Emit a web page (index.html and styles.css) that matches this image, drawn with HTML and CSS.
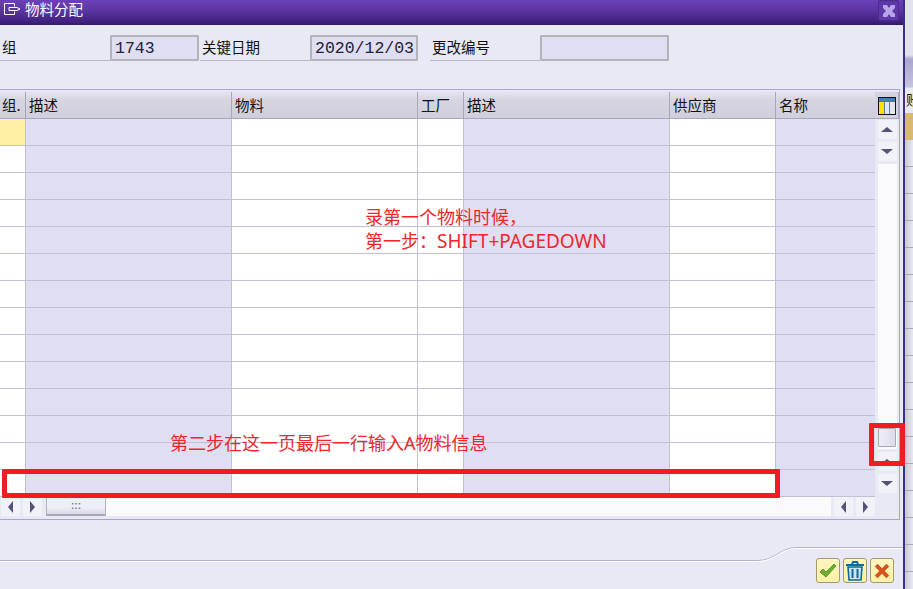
FILE: index.html
```html
<!DOCTYPE html>
<html>
<head>
    <title>物料分配</title>
    <link rel="stylesheet" href="styles.css">
</head>
<body>

<div class="window">
    <div class="titlebar">
        <svg class="title-icon" width="19" height="14" viewBox="0 0 19 14"><path d="M1.5 1.5h10v3M1.5 1.5v11h10v-3M6 5.5h8l3 1.5-3 1.5H6z" fill="none" stroke="#fff" stroke-width="1"/></svg>
        <span class="title-txt">物料分配</span>
        <span class="btn-close">
            <svg width="16" height="16" viewBox="0 0 16 16"><path d="M2 2h4l2 3 2-3h4v3l-3 3 3 3v3h-4l-2-3-2 3H2v-3l3-3-3-3z" fill="#b9a6ea"/></svg>
        </span>
    </div>

    <div class="form-row">
        <label class="lbl lbl-group">组</label>
        <span class="field field-group">1743</span>
        <label class="lbl lbl-date">关键日期</label>
        <span class="field field-date">2020/12/03</span>
        <label class="lbl lbl-change">更改编号</label>
        <span class="field field-change"></span>
    </div>

    <div class="frame">
        <div class="grid-wrap">
            <table class="grid" cellpadding="0" cellspacing="0">
                <colgroup>
                    <col class="c-group"><col class="c-desc1"><col class="c-mat"><col class="c-plant"><col class="c-desc2"><col class="c-vendor"><col class="c-name">
                </colgroup>
                <thead>
                    <tr><th>组.</th><th>描述</th><th>物料</th><th>工厂</th><th>描述</th><th>供应商</th><th>名称</th></tr>
                </thead>
                <tbody>
                    <tr><td class="sel"></td><td class="ro"></td><td></td><td></td><td class="ro"></td><td></td><td class="ro"></td></tr>
                    <tr><td></td><td class="ro"></td><td></td><td></td><td class="ro"></td><td></td><td class="ro"></td></tr>
                    <tr><td></td><td class="ro"></td><td></td><td></td><td class="ro"></td><td></td><td class="ro"></td></tr>
                    <tr><td></td><td class="ro"></td><td></td><td></td><td class="ro"></td><td></td><td class="ro"></td></tr>
                    <tr><td></td><td class="ro"></td><td></td><td></td><td class="ro"></td><td></td><td class="ro"></td></tr>
                    <tr><td></td><td class="ro"></td><td></td><td></td><td class="ro"></td><td></td><td class="ro"></td></tr>
                    <tr><td></td><td class="ro"></td><td></td><td></td><td class="ro"></td><td></td><td class="ro"></td></tr>
                    <tr><td></td><td class="ro"></td><td></td><td></td><td class="ro"></td><td></td><td class="ro"></td></tr>
                    <tr><td></td><td class="ro"></td><td></td><td></td><td class="ro"></td><td></td><td class="ro"></td></tr>
                    <tr><td></td><td class="ro"></td><td></td><td></td><td class="ro"></td><td></td><td class="ro"></td></tr>
                    <tr><td></td><td class="ro"></td><td></td><td></td><td class="ro"></td><td></td><td class="ro"></td></tr>
                    <tr><td></td><td class="ro"></td><td></td><td></td><td class="ro"></td><td></td><td class="ro"></td></tr>
                    <tr><td></td><td class="ro"></td><td></td><td></td><td class="ro"></td><td></td><td class="ro"></td></tr>
                    <tr><td></td><td class="ro"></td><td></td><td></td><td class="ro"></td><td></td><td class="ro"></td></tr>
                </tbody>
            </table>

            <div class="vbar">
                <div class="cfg-cell">
                    <svg width="18" height="18" viewBox="0 0 18 18">
                        <rect x="0.5" y="0.5" width="17" height="17" fill="#fff" stroke="#111"/>
                        <rect x="1" y="1" width="16" height="4" fill="#3f7fb5"/>
                        <rect x="1" y="5" width="5" height="12" fill="#ffe000"/>
                        <rect x="7" y="5" width="4" height="12" fill="#e4e6ee"/>
                        <rect x="12" y="5" width="5" height="12" fill="#e4e6ee"/>
                        <path d="M6.5 1v16M11.5 1v16" stroke="#5f7f9f"/>
                    </svg>
                </div>
                <span class="sb-btn"><i class="arr arr-up"></i></span>
                <span class="sb-btn sb-gap"><i class="arr arr-down"></i></span>
                <div class="vtrack"><span class="vthumb"></span></div>
                <span class="sb-btn"><i class="arr arr-up"></i></span>
                <span class="sb-btn sb-gap"><i class="arr arr-down"></i></span>
            </div>
        </div>

        <div class="hbar">
            <span class="sb-btn"><i class="arr arr-left"></i></span>
            <span class="sb-btn"><i class="arr arr-right"></i></span>
            <div class="htrack">
                <span class="hthumb">:::</span>
            </div>
            <span class="sb-btn"><i class="arr arr-left"></i></span>
            <span class="sb-btn"><i class="arr arr-right"></i></span>
        </div>
    </div>

    <div class="footer">
        <svg class="footer-line" width="903" height="20" viewBox="0 0 903 20"><path d="M0 14.5H758C775 14.5 780 1.5 797 1.5H903" fill="none" stroke="#b4b0d2"/><path d="M0 15.5H758C775 15.5 780 2.5 797 2.5H903" fill="none" stroke="#fff"/></svg>
        <div class="actions">
            <span class="act-btn">
                <svg width="18" height="16" viewBox="0 0 18 16"><path d="M1 9l3-3 3 3 8-8 2 2-10 11z" fill="#6fae2c" stroke="#3f7f1c" stroke-width="0.7"/></svg>
            </span>
            <span class="act-btn">
                <svg width="20" height="22" viewBox="0 0 20 20"><path d="M1 4h18M7 3l1-2h4l1 2" fill="none" stroke="#0d6a9c" stroke-width="2"/><path d="M3 6h14l-1 13H4z" fill="#cfe3ef" stroke="#0d6a9c" stroke-width="1.6"/><path d="M7.5 8v9M12.5 8v9" stroke="#0d6a9c" stroke-width="2"/></svg>
            </span>
            <span class="act-btn">
                <svg width="18" height="18" viewBox="0 0 16 16"><path d="M2 4l2-2 4 4 4-4 2 2-4 4 4 4-2 2-4-4-4 4-2-2 4-4z" fill="#d9541a" stroke="#b73f10" stroke-width="0.7"/></svg>
            </span>
        </div>
    </div>

    <div class="note note-1">录第一个物料时候，<br>第一步：<span class="note-latin">SHIFT+PAGEDOWN</span></div>
    <div class="note note-2">第二步在这一页最后一行输入A物料信息</div>
    <div class="mark mark-row"></div>
    <div class="mark mark-scroll"></div>
</div>

<div class="behind">
    <div class="behind-head">账</div>
    <div class="behind-sel"></div>
    <div class="behind-rows"></div>
</div>

</body>
</html>
```

FILE: styles.css
```css
html, body { margin: 0; height: 100%; overflow: hidden; }
body {
    display: flex;
    width: 913px;
    height: 589px;
    font-family: "Noto Sans CJK SC", "Liberation Sans", sans-serif;
    font-size: 14px;
    color: #111;
    background: #e6e6ee;
}

/* popup */
.window {
    position: relative;
    width: 903px;
    height: 589px;
    flex: none;
    background: #e9e9f6;
    border-right: 2px solid #3e2f86;
}
.titlebar {
    display: flex;
    align-items: flex-start;
    height: 25px;
    box-sizing: border-box;
    padding: 0 4px 0 3px;
    background: linear-gradient(#6d40b8, #5a34a0 45%, #3d1f7c 90%, #2f1766);
}
.title-icon { margin: 2px 3px 0 0; }
.title-txt { margin-top: 1px; color: #fff; font-size: 14.5px; line-height: 16px; }
.btn-close {
    display: flex;
    align-items: center;
    justify-content: center;
    width: 19px;
    height: 19px;
    margin: 0 0 0 auto;
    background: #5d39a8;
    border: 1px solid #4a2b8e;
    border-radius: 2px;
}

/* form */
.form-row {
    display: flex;
    align-items: stretch;
    height: 26px;
    margin-top: 10px;
    margin-bottom: 28px;
}
.lbl {
    box-sizing: border-box;
    padding-left: 2px;
    font-size: 14.5px;
    line-height: 24px;
    border-bottom: 1px solid #b8b8c0;
}
.lbl-group { width: 110px; }
.lbl-date { width: 110px; margin-left: 1px; }
.lbl-change { width: 110px; margin-left: 12px; margin-right: -1px; padding-left: 2px; }
.field {
    box-sizing: border-box;
    padding-left: 3px;
    font-family: "Liberation Mono", monospace;
    font-size: 16.5px;
    line-height: 24px;
    color: #223;
    background: #e0def3;
    border: 2px solid #b4b4b8;
    border-radius: 1px;
}
.field-group { width: 89px; }
.field-date { width: 108px; }
.field-change { width: 129px; margin-left: 1px; }

/* table control */
.frame {
    box-sizing: border-box;
    width: 900px;
    height: 431px;
    padding-top: 2px;
    border: 1px solid #a9a3cf;
    border-left: 0;
}
.grid-wrap { display: flex; height: 405px; }
.grid {
    width: 875px;
    table-layout: fixed;
    border-collapse: separate;
    border-spacing: 0;
    background: #fff;
}
.c-group { width: 26px; }
.c-desc1 { width: 206px; }
.c-mat { width: 186px; }
.c-plant { width: 46px; }
.c-desc2 { width: 206px; }
.c-vendor { width: 106px; }
.c-name { width: 99px; }
.grid th {
    height: 26px;
    padding: 0 0 0 3px;
    overflow: hidden;
    font-size: 14.5px;
    font-weight: normal;
    line-height: 24px;
    text-align: left;
    white-space: nowrap;
    background: linear-gradient(#e6e5ee, #d6d5e0 30%, #cfcedb);
    border-right: 1px solid #a8a6b8;
    border-bottom: 1px solid #a9a7bd;
}
.grid th:first-child { padding-left: 2px; }
.grid th:last-child { border-right: 0; }
.grid td {
    height: 26px;
    padding: 0;
    border-right: 1px solid #c3c0d6;
    border-bottom: 1px solid #c3c0d6;
}
.grid td:last-child { border-right: 0; }
.grid td.ro { background: #e0def3; }
.grid td.sel { background: #fff0a5; }

/* scrollbars */
.vbar {
    display: flex;
    flex-direction: column;
    align-items: center;
    box-sizing: border-box;
    width: 24px;
    padding-bottom: 4px;
}
.cfg-cell {
    display: flex;
    align-items: center;
    justify-content: center;
    box-sizing: border-box;
    width: 24px;
    height: 27px;
    padding-top: 2px;
    background: #d3d2de;
    border-right: 1px solid #a9a7bd;
    border-bottom: 1px solid #a9a7bd;
}
.sb-btn {
    display: flex;
    flex: none;
    align-items: center;
    justify-content: center;
    width: 19px;
    height: 19px;
    background: #f1f1f8;
}
.vbar .sb-btn:nth-child(2) { margin-top: 1px; }
.sb-gap { margin-top: 3px; }
.vtrack {
    display: flex;
    flex: 1;
    flex-direction: column;
    justify-content: flex-end;
    align-items: center;
    width: 19px;
    margin: 3px 0;
    background: #fafafc;
}
.vthumb {
    box-sizing: border-box;
    width: 18px;
    height: 19px;
    margin-bottom: 2px;
    background: linear-gradient(90deg, #eeedf7, #dcdbeb);
    border: 1px solid #a8a7b5;
    border-radius: 1px;
}
.arr { display: block; width: 0; height: 0; border-style: solid; border-color: transparent; }
.arr-up { border-width: 0 6px 5px; border-bottom-color: #55527a; }
.arr-down { border-width: 5px 6px 0; border-top-color: #55527a; }
.arr-left { border-width: 6px 5px 6px 0; border-right-color: #55527a; }
.arr-right { border-width: 6px 0 6px 5px; border-left-color: #55527a; }
.hbar {
    display: flex;
    gap: 3px;
    width: 874px;
    height: 19px;
    margin-left: 1px;
}
.htrack {
    flex: 1;
    margin-left: 1px;
    background: #fafafc;
}
.hthumb {
    display: block;
    box-sizing: border-box;
    width: 60px;
    height: 19px;
    margin-top: 0;
    color: #77778f;
    font-family: "Liberation Sans", sans-serif;
    font-size: 10px;
    font-weight: bold;
    line-height: 18px;
    text-align: center;
    background: linear-gradient(#eeeef6, #eeeef6 60%, #d8d8e8);
    border: 1px solid #b4b3c4;
    border-top: 0;
    border-bottom: 2px solid #a8a7b5;
}

/* footer */
.footer {
    position: relative;
    display: flex;
    justify-content: flex-end;
    align-items: flex-start;
    height: 69px;
    padding-right: 5px;
    box-sizing: border-box;
}
.footer-line { position: absolute; top: 26px; left: 0; }
.actions { display: flex; gap: 3px; margin-top: 38px; margin-right: 4px; }
.act-btn {
    display: flex;
    align-items: center;
    justify-content: center;
    box-sizing: border-box;
    width: 24px;
    height: 25px;
    background: linear-gradient(#fff6bd, #fff0a8);
    border: 1px solid #9f9a72;
    border-radius: 3px;
}

/* red notes drawn over the screenshot */
.note {
    position: absolute;
    color: #f0262b;
    font-family: "Noto Sans", "Noto Sans CJK SC", sans-serif;
    font-size: 18px;
    line-height: 24px;
    white-space: nowrap;
}
.note-latin { font-size: 19px; }
.note-1 { top: 205px; left: 365px; }
.note-2 { top: 431px; left: 170px; }
.mark {
    position: absolute;
    box-sizing: border-box;
    border: 5px solid #ee1c25;
    border-radius: 1px;
}
.mark-row { top: 469px; left: 2px; width: 778px; height: 29px; }
.mark-scroll { top: 423px; left: 869px; width: 36px; height: 43px; }

/* what shows behind the popup */
.behind {
    flex: 1;
    min-width: 0;
    overflow: hidden;
    background: linear-gradient(90deg, #c9c9d2, #e8e8f0);
}
.behind-head {
    height: 113px;
    box-sizing: border-box;
    padding-top: 90px;
    padding-left: 1px;
    font-size: 14px;
    line-height: 18px;
    background: linear-gradient(#e2e2ea 55px, #b5b3d6 58px, #a9a6cf 60px, #c6c4de 87px, #eaeaf2 88px);
}
.behind-sel { height: 27px; background: #d8b874; }
.behind-rows {
    height: 449px;
    background: repeating-linear-gradient(transparent 0, transparent 26px, #a9a7bd 26px, #a9a7bd 27px);
}
```
